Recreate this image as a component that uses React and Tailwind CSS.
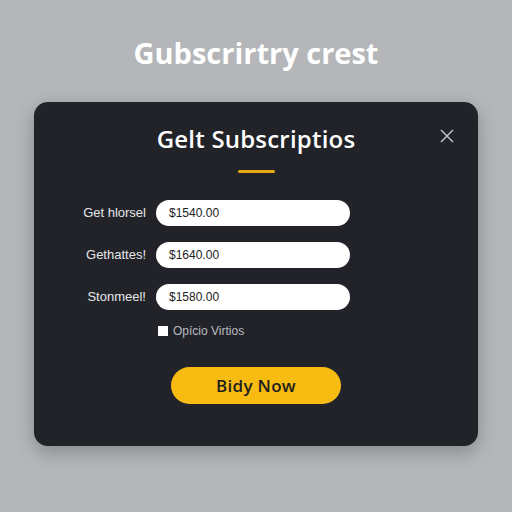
const PLANS = [
  { label: 'Get hlorsel', price: '$1540.00' },
  { label: 'Gethattes!', price: '$1640.00' },
  { label: 'Stonmeel!', price: '$1580.00' },
];

export default function App() {
  return (
    <div className="w-[512px] h-[512px] bg-[#b4b6b9] flex flex-col items-center font-['Open_Sans',sans-serif]">
      <h1 className="mt-[34px] text-[29px] leading-[37px] font-bold text-white tracking-[0px]">
        Gubscrirtry crest
      </h1>

      {/* modal card */}
      <div className="relative mt-[31px] w-[444px] h-[344px] rounded-[14px] bg-[#212329] shadow-[0_6px_18px_rgba(0,0,0,0.25)] flex flex-col items-center">
        <button className="absolute right-[24px] top-[27px] text-[#c9cbd0]">
          <svg width="14" height="14" viewBox="0 0 14 14" fill="none" stroke="currentColor" strokeWidth="1.4">
            <path d="M1 1 L13 13 M13 1 L1 13" />
          </svg>
        </button>

        <h2 className="mt-[22px] text-[24px] leading-[30px] font-semibold text-white tracking-[0.2px]">Gelt Subscriptios</h2>
        <div className="mt-[16px] w-[37px] h-[3px] bg-[#e9a812] rounded-full" />

        <div className="mt-[27px] flex flex-col gap-[16px] self-start ml-[46px]">
          {PLANS.map(p => (
            <div key={p.label} className="flex items-center">
              <span className="w-[66px] text-right text-[13px] text-[#e6e7ea] font-['Liberation_Sans',sans-serif] whitespace-nowrap">
                {p.label}
              </span>
              <div className="ml-[10px] w-[194px] h-[26px] rounded-full bg-white flex items-center pl-[13px] text-[12px] text-[#222] font-['Liberation_Sans',sans-serif]">
                {p.price}
              </div>
            </div>
          ))}
        </div>

        <label className="mt-[12px] self-start ml-[124px] flex items-center gap-[5px]">
          <span className="w-[10px] h-[10px] bg-white" />
          <span className="text-[12px] text-[#b9bbc0] font-['Liberation_Sans',sans-serif]">Opício Virtios</span>
        </label>

        <button className="mt-[27px] w-[170px] h-[37px] rounded-full bg-[#f8bb12] text-[17px] font-semibold text-[#1d1d1f] tracking-[0.3px]">
          Bidy Now
        </button>
      </div>
    </div>
  );
}
